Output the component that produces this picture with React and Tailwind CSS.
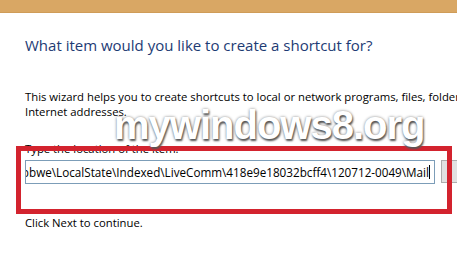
export default function App() {
  const path =
    "C:\\Users\\user\\AppData\\Local\\Packages\\microsoft.windowscommunicationsapps_8wekyb3d8bbwe\\LocalState\\Indexed\\LiveComm\\418e9e18032bcff4\\120712-0049\\Mail";

  return (
    <div className="relative w-[457px] h-[256px] overflow-hidden bg-white font-['Open_Sans',sans-serif] text-[#000]">
      <div className="h-[13px] bg-[#d9a764] border-b border-[#cf9c58]" />

      <div className="pl-[25px]">
        <h1 className="mt-[22px] text-[15px] leading-[20px] text-[#1d3b74] font-normal">
          What item would you like to create a shortcut for?
        </h1>

        <p className="mt-[34px] text-[11.3px] leading-[15px] whitespace-nowrap">
          This wizard helps you to create shortcuts to local or network programs, files, folders, computers, or
          <br />
          Internet addresses.
        </p>

        <p className="mt-[22px] text-[11.3px] leading-[15px]">Type the location of the item:</p>

        <div className="mt-[4px] flex items-start gap-[6px]">
          <div className="w-[410px] h-[24px] shrink-0 border border-[#7c9db8] flex justify-end items-center overflow-hidden pr-[4px]">
            <span className="whitespace-nowrap text-[11.7px] leading-[15px]">{path}</span>
            <span className="w-px h-[14px] bg-black shrink-0" />
          </div>
          <div className="w-[80px] h-[23px] shrink-0 bg-[#e1e1e1] border border-[#adadad]" />
        </div>

        <p className="mt-[31px] text-[11.3px] leading-[15px]">Click Next to continue.</p>
      </div>

      <div className="absolute left-[16px] top-[146px] w-[436px] h-[68px] border-[5px] border-[#d3232e]" />

      <div className="absolute left-[114px] top-[102px] text-[40px] leading-[46px] font-bold tracking-[-1px] text-white font-['Liberation_Sans',sans-serif] [text-shadow:1px_2px_2px_#555,0_0_3px_#888]">
        mywindows8.org
      </div>
    </div>
  );
}
